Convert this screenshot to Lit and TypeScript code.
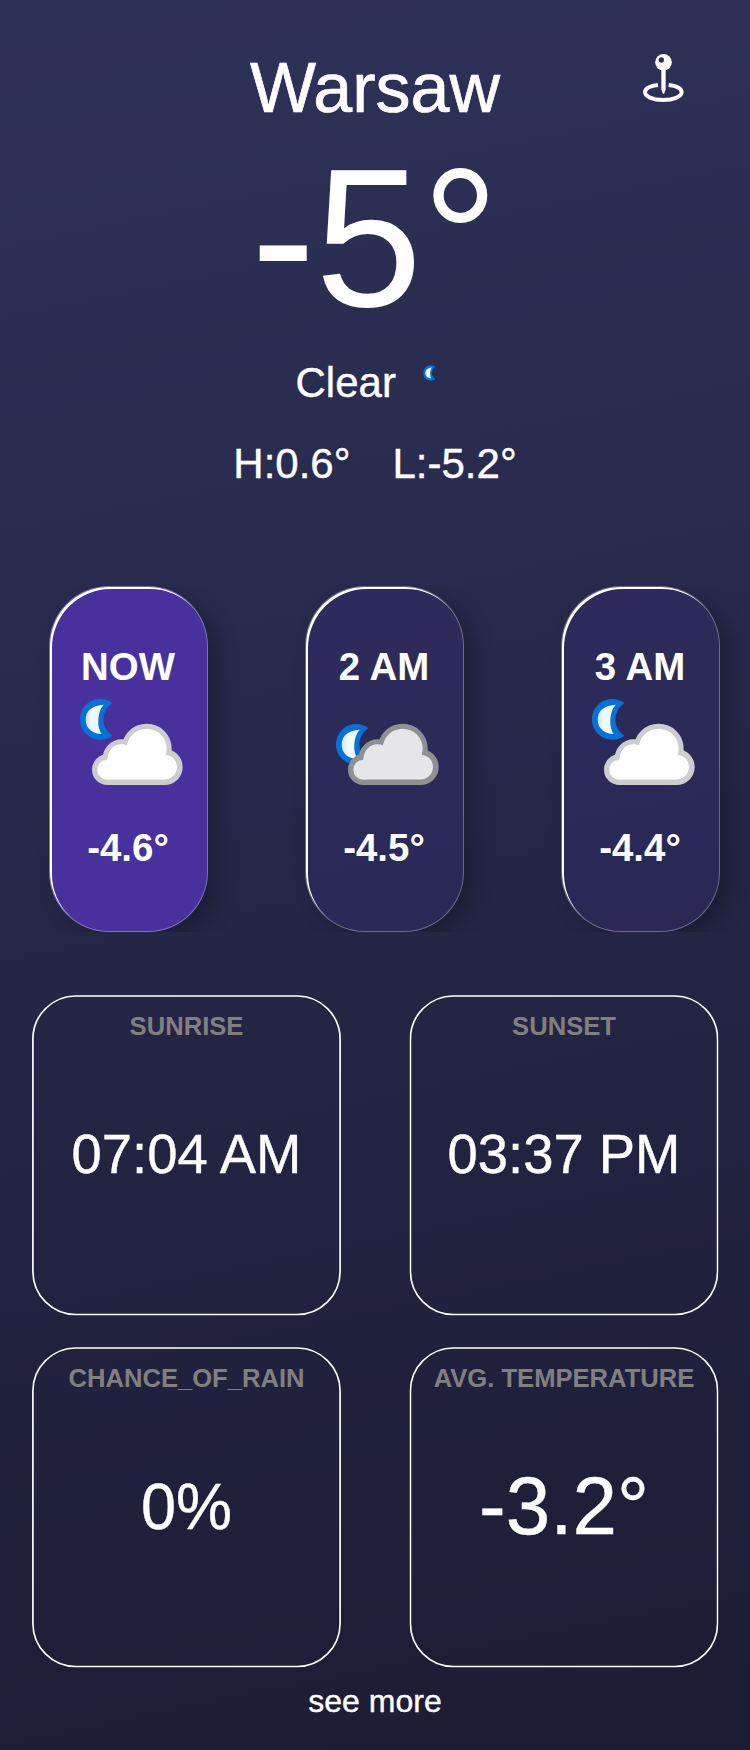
import { LitElement, html, svg, css, TemplateResult } from "lit";

type Sky = "partly" | "overcast";

interface Hour {
  label: string;
  temp: string;
  sky: Sky;
  now?: boolean;
}

interface Detail {
  title: string;
  value: string;
  size: "time" | "percent" | "degrees";
}

const HOURS: Hour[] = [
  { label: "NOW", temp: "-4.6°", sky: "partly", now: true },
  { label: "2 AM", temp: "-4.5°", sky: "overcast" },
  { label: "3 AM", temp: "-4.4°", sky: "partly" },
];

const DETAILS: Detail[] = [
  { title: "SUNRISE", value: "07:04 AM", size: "time" },
  { title: "SUNSET", value: "03:37 PM", size: "time" },
  { title: "CHANCE_OF_RAIN", value: "0%", size: "percent" },
  { title: "AVG. TEMPERATURE", value: "-3.2°", size: "degrees" },
];

const moon = svg`
  <path fill="#0572d4" d="M247 396A61 61 0 1 0 247 494Q220 475 220 446Q220 416 247 396Z"/>
  <path fill="url(#glow)" d="M221 401C186 403 167 420 167 446C167 472 188 489 215 489C201 470 200 425 221 401Z"/>`;

const glow = svg`
  <defs>
    <linearGradient id="glow" x1="0" y1="0" x2="1" y2="0">
      <stop offset="0" stop-color="#c4e6ff"/>
      <stop offset=".35" stop-color="#f4fbff"/>
      <stop offset="1" stop-color="#e2f8ff"/>
    </linearGradient>
  </defs>`;

class WeatherIcon extends LitElement {
  static properties = { sky: { type: String } };
  declare sky: Sky;

  static styles = css`
    :host { display: block; width: 108px; height: 108px; }
    svg { display: block; width: 100%; height: 100%; overflow: visible; }
    .edge { fill: #cdcdcf; }
    .body { fill: #fefefe; }
    .overcast .edge { fill: #8f9092; }
    .overcast .body { fill: #e6e6e9; }
  `;

  render() {
    return html`<svg class=${this.sky} viewBox="132 354 324 324">
      ${glow}
      <g transform=${this.sky === "overcast" ? "translate(0 75)" : "translate(0 0)"}>${moon}</g>
      <g class="edge">
        <circle cx="232" cy="596" r="46"/>
        <circle cx="275" cy="562" r="57"/>
        <circle cx="350" cy="533" r="75"/>
        <circle cx="404" cy="588" r="54"/>
        <path d="M232 560H404V642H232Z"/>
      </g>
      <g class="body">
        <circle cx="232" cy="596" r="30"/>
        <circle cx="275" cy="562" r="42"/>
        <circle cx="350" cy="533" r="60"/>
        <circle cx="404" cy="588" r="37"/>
        <path d="M232 560H404V625.5H232Z"/>
      </g>
    </svg>`;
  }
}
customElements.define("weather-icon", WeatherIcon);

class AppRoot extends LitElement {
  static styles = css`
    :host {
      display: block;
      font-family: "Liberation Sans", Arial, sans-serif;
      color: #fff;
    }
    .page {
      box-sizing: border-box;
      height: 1750px;
      padding-top: 53px;
      overflow: hidden;
      display: flex;
      flex-direction: column;
      background: linear-gradient(168.44deg, #2e335a -1.72%, #1c1b33 100.95%);
      line-height: 1;
      white-space: nowrap;
    }
    .current, .range, .title, .time, .percent, .degrees {
      transform-origin: 50% 84%;
    }
    .sky, .range, .time, .percent, .degrees, .more {
      -webkit-text-stroke: 0.4px #fff;
    }
    .top {
      display: grid;
      grid-template-columns: 1fr auto 1fr;
      height: 70px;
    }
    .city { grid-column: 2; font-size: 70px; -webkit-text-stroke: 0.7px #fff; }
    .pin { justify-self: end; margin-right: 66px; width: 42px; height: 50px; }
    .current {
      margin-top: 20px;
      text-align: center;
      font-size: 192px;
      transform: translateY(0.5px) scaleY(1.022);
    }
    .sky {
      display: flex;
      margin: 27px 0 0 295.5px;
      height: 42px;
      font-size: 42px;
    }
    .small-moon { width: 13px; height: 16px; margin: 3px 0 0 27px; }
    .range {
      display: flex;
      justify-content: center;
      gap: 42px;
      margin-top: 39px;
      font-size: 42px;
      transform: scaleY(1.03);
    }
    .hours {
      display: flex;
      gap: 97px;
      margin-top: 101px;
      padding-left: 49px;
      height: 346px;
      overflow: hidden;
    }
    .hour {
      box-sizing: border-box;
      flex: none;
      width: 159px;
      height: 346px;
      padding: 61px 1px 0 0;
      display: flex;
      flex-direction: column;
      align-items: center;
      border: 1px solid rgba(255, 255, 255, 0.3);
      border-radius: 60px;
      background: rgba(72, 49, 157, 0.2);
      box-shadow: 10px 8px 20px rgba(0, 0, 0, 0.25), inset 2px 2px 0 #fff;
      font-size: 38.4px;
      font-weight: bold;
    }
    .hour.now { background: #48319d; }
    .icon { margin: 2.6px 0 32.4px; }
    .details {
      display: grid;
      grid-template-columns: 309px 309px;
      grid-auto-rows: 321px;
      gap: 31px 68px;
      margin: 63px 0 0 32px;
    }
    .card { display: grid; grid-template: 321px / 309px; }
    .card > * { grid-area: 1 / 1; }
    .card:nth-child(even) { transform: translateX(0.5px); }
    .frame { width: 309px; height: 321px; fill: none; stroke: #fff; stroke-width: 1.67; }
    .content {
      display: grid;
      grid-template-rows: 45px 230px 45px;
      justify-items: center;
      align-items: center;
    }
    .title {
      align-self: end;
      font-size: 25.6px;
      font-weight: bold;
      color: #808080;
      transform: scaleY(1.04);
    }
    .time { padding-top: 1px; font-size: 54.4px; transform: scaleY(1.02); }
    .percent { font-size: 63px; transform: scaleY(1.04); }
    .degrees { font-size: 80px; transform: scaleY(1.03); }
    .more { margin-top: 17px; text-align: center; font-size: 32px; }
  `;

  private hour(h: Hour): TemplateResult {
    return html`<div class="hour ${h.now ? "now" : ""}">
      <div>${h.label}</div>
      <weather-icon class="icon" .sky=${h.sky}></weather-icon>
      <div>${h.temp}</div>
    </div>`;
  }

  private detail(d: Detail): TemplateResult {
    return html`<div class="card">
      <svg class="frame" viewBox="0 0 309 321">
        <rect x=".9" y="1" width="307.2" height="318.5" rx="43"/>
      </svg>
      <div class="content">
        <div class="title">${d.title}</div>
        <div class=${d.size}>${d.value}</div>
      </div>
    </div>`;
  }

  render() {
    return html`<div class="page">
      <div class="top">
        <div class="city">Warsaw</div>
        <svg class="pin" viewBox="66 39 126 150">
          <path fill="none" stroke="#fff" stroke-width="12"
            d="M114 135C90 138 75 146 75 157C75 170 100 180 130 180C160 180 185 170 185 157C185 146 170 138 146 135"/>
          <circle cx="130.500" cy="67" r="25" fill="#fff"/>
          <circle cx="124" cy="60" r="8" fill="#2e325a"/>
          <path fill="#fff" d="M124 88H137V148L133 160Q130.500 163 128 160L124 148Z"/>
        </svg>
      </div>
      <div class="current">-5°</div>
      <div class="sky">
        <span>Clear</span>
        <svg class="small-moon" viewBox="148 382 104 128">${glow}${moon}</svg>
      </div>
      <div class="range"><span>H:0.6°</span><span>L:-5.2°</span></div>
      <div class="hours">${HOURS.map((h) => this.hour(h))}</div>
      <div class="details">${DETAILS.map((d) => this.detail(d))}</div>
      <div class="more">see more</div>
    </div>`;
  }
}
customElements.define("app-root", AppRoot);
